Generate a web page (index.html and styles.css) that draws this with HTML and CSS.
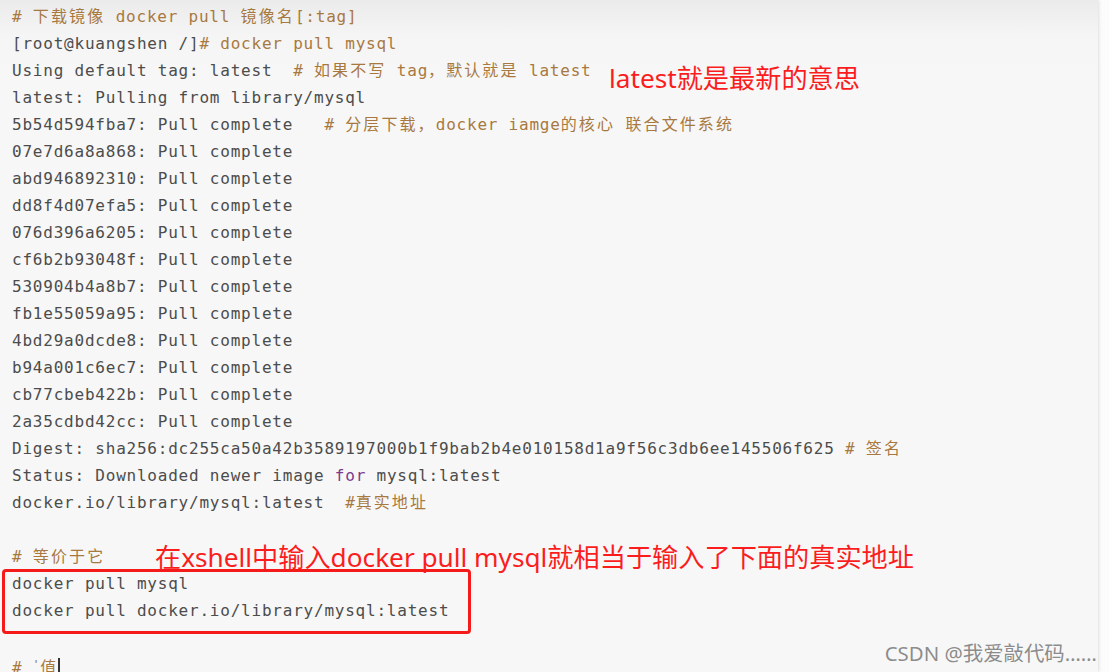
FILE: index.html
```html
<!DOCTYPE html>
<html lang="zh-CN">
<head>
    <meta charset="UTF-8">
    <meta name="viewport" content="width=device-width, initial-scale=1.0">
    <title>docker pull mysql</title>
    <link rel="stylesheet" href="styles.css">
</head>
<body>
  <div class="sheet">
<pre class="code"><span class="cm"># <span class="zh">下载镜像</span> docker pull <span class="zh">镜像名</span>[:tag]</span>
[root@kuangshen /]<span class="cm"># docker pull mysql</span>
Using default tag: latest  <span class="cm"># <span class="zh">如果不写</span> tag<span class="zh">，默认就是</span> latest</span>
latest: Pulling from library/mysql
5b54d594fba7: Pull complete   <span class="cm"># <span class="zh">分层下载，</span>docker iamge<span class="zh">的核心</span> <span class="zh">联合文件系统</span></span>
07e7d6a8a868: Pull complete
abd946892310: Pull complete
dd8f4d07efa5: Pull complete
076d396a6205: Pull complete
cf6b2b93048f: Pull complete
530904b4a8b7: Pull complete
fb1e55059a95: Pull complete
4bd29a0dcde8: Pull complete
b94a001c6ec7: Pull complete
cb77cbeb422b: Pull complete
2a35cdbd42cc: Pull complete
Digest: sha256:dc255ca50a42b3589197000b1f9bab2b4e010158d1a9f56c3db6ee145506f625 <span class="cm"># <span class="zh">签名</span></span>
Status: Downloaded newer image <span class="kw">for</span> mysql:latest
docker.io/library/mysql:latest  <span class="cm">#<span class="zh">真实地址</span></span>

<span class="cm"># <span class="zh">等价于它</span></span>
docker pull mysql
docker pull docker.io/library/mysql:latest

<span class="cm"># <span class="tick">'</span><span class="zh">值</span></span><span class="caret"></span></pre>

    <div class="note note-latest">latest就是最新的意思</div>
    <div class="note note-xshell">在xshell中输入docker pull mysql就相当于输入了下面的真实地址</div>
    <div class="mark"></div>
  </div>
  <div class="watermark">CSDN @我爱敲代码……</div>
</body>
</html>
```

FILE: styles.css
```css
html, body {
    margin: 0;
    height: 100%;
}

body {
    background: #fcfcfc;
    overflow: hidden;
    position: relative;
}

.sheet {
    position: relative;
    width: 1098px;
    height: 672px;
    background: linear-gradient(#ebebeb 0, #f5f5f5 36px, #f7f7f7 80px, #f7f7f7);
    box-shadow: 1px 0 3px rgba(0, 0, 0, 0.12);
}

.code {
    margin: 0;
    padding: 3px 0 0 12px;
    font-family: "DejaVu Sans Mono", "Noto Sans CJK SC", monospace;
    font-size: 16px;
    line-height: 27px;
    letter-spacing: .78px;
    color: #4c4c4c;
}

.cm {
    color: #a8793f;
}

.zh {
    letter-spacing: 2.1px;
}

.kw {
    color: #7a3b8f;
}

.tick {
    font-size: 11px;
    vertical-align: 5px;
    color: #8a6a40;
}

.caret {
    display: inline-block;
    width: 2px;
    height: 19px;
    background: #333;
    vertical-align: -4px;
}

.note {
    position: absolute;
    font-family: "Noto Sans", "Noto Sans CJK SC", sans-serif;
    font-size: 26.2px;
    line-height: 30px;
    color: #fb1d1d;
    white-space: nowrap;
}

.note-latest {
    left: 609px;
    top: 63px;
}

.note-xshell {
    left: 155px;
    top: 542px;
}

.mark {
    position: absolute;
    left: 2px;
    top: 569px;
    width: 469px;
    height: 65px;
    box-sizing: border-box;
    border: 3px solid #f51b1b;
    border-radius: 4px;
}

.watermark {
    position: absolute;
    right: 12px;
    top: 641px;
    font-family: "Noto Sans", "Noto Sans CJK SC", sans-serif;
    font-size: 20.4px;
    line-height: 24px;
    color: #8c8c8c;
    text-shadow: 0 0 1px #fff;
    white-space: nowrap;
}
```
